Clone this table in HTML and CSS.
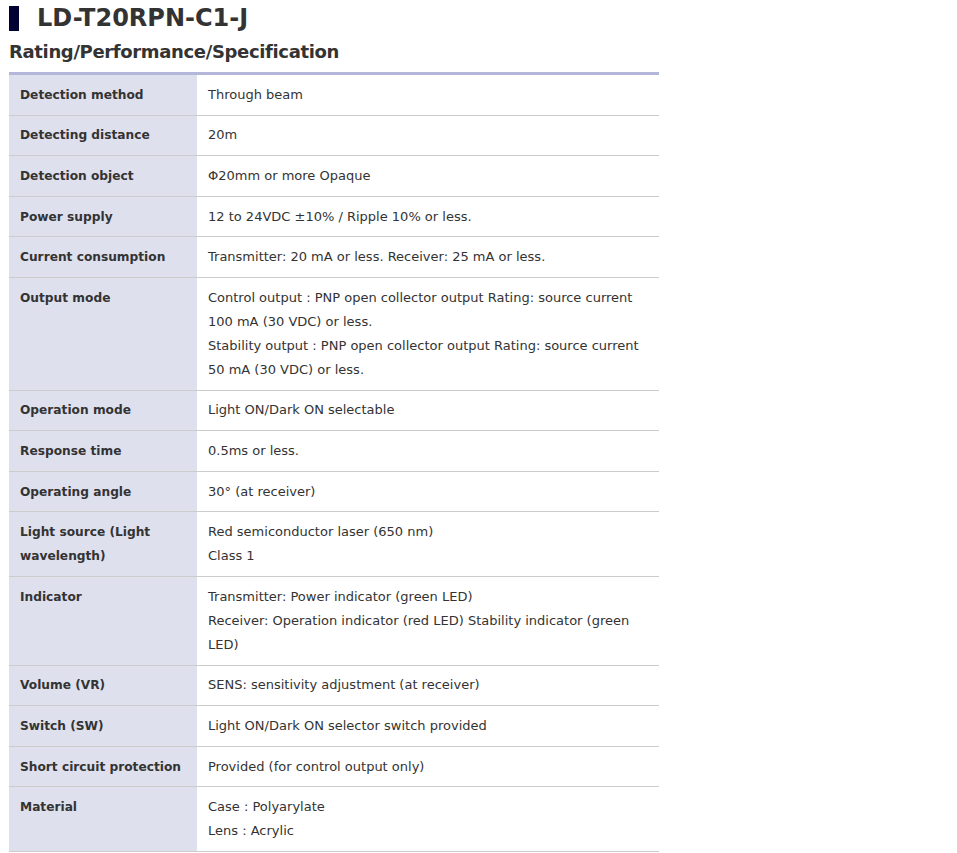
FILE: index.html
```html
<!DOCTYPE html>
<html>
<head>
<meta charset="utf-8">
<link rel="stylesheet" href="styles.css">
</head>
<body>
<div class="page">
  <h1 class="title"><span class="bar"></span>LD-T20RPN-C1-J</h1>
  <h2 class="subtitle">Rating/Performance/Specification</h2>
  <table class="spec">
    <tr><th>Detection method</th><td>Through beam</td></tr>
    <tr><th>Detecting distance</th><td>20m</td></tr>
    <tr><th>Detection object</th><td>Φ20mm or more Opaque</td></tr>
    <tr><th>Power supply</th><td>12 to 24VDC ±10% / Ripple 10% or less.</td></tr>
    <tr><th>Current consumption</th><td>Transmitter: 20 mA or less. Receiver: 25 mA or less.</td></tr>
    <tr><th>Output mode</th><td>Control output : PNP open collector output Rating: source current 100 mA (30 VDC) or less.<br>Stability output : PNP open collector output Rating: source current 50 mA (30 VDC) or less.</td></tr>
    <tr><th>Operation mode</th><td>Light ON/Dark ON selectable</td></tr>
    <tr><th>Response time</th><td>0.5ms or less.</td></tr>
    <tr><th>Operating angle</th><td>30° (at receiver)</td></tr>
    <tr><th>Light source (Light wavelength)</th><td>Red semiconductor laser (650 nm)<br>Class 1</td></tr>
    <tr><th>Indicator</th><td>Transmitter: Power indicator (green LED)<br>Receiver: Operation indicator (red LED) Stability indicator (green LED)</td></tr>
    <tr><th>Volume (VR)</th><td>SENS: sensitivity adjustment (at receiver)</td></tr>
    <tr><th>Switch (SW)</th><td>Light ON/Dark ON selector switch provided</td></tr>
    <tr><th>Short circuit protection</th><td>Provided (for control output only)</td></tr>
    <tr><th>Material</th><td>Case : Polyarylate<br>Lens : Acrylic</td></tr>
  </table>
</div>
</body>
</html>
```
FILE: styles.css
```css
html, body {
  margin: 0;
  padding: 0;
  background: #fff;
}
body {
  font-family: "DejaVu Sans", Verdana, sans-serif;
  color: #333;
}
.page {
  padding: 0 0 0 9px;
  width: 650px;
}
.title {
  display: flex;
  align-items: center;
  margin: 0;
  padding-top: 3px;
  height: 30px;
  font-size: 24px;
  font-weight: bold;
  line-height: 30px;
  color: #333;
}
.bar {
  width: 10px;
  height: 25px;
  background: #000033;
  margin-right: 18px;
}
.subtitle {
  margin: 0;
  padding-top: 7px;
  height: 32px;
  font-size: 18px;
  letter-spacing: -0.35px;
  line-height: 24px;
  font-weight: bold;
  color: #333;
}
.spec {
  width: 650px;
  border-collapse: collapse;
  border-top: 3px solid #b4b7d9;
  font-size: 13px;
  line-height: 24px;
}
.spec th, .spec td {
  text-align: left;
  vertical-align: top;
  border-bottom: 1px solid #cccccc;
  padding: 7.8px 8px 7.8px 11px;
}
.spec th {
  width: 169px;
  background: #dfe0ee;
  font-weight: bold;
  font-size: 12.2px;
}
.spec td {
  padding-left: 11px;
  padding-right: 20px;
}
```
